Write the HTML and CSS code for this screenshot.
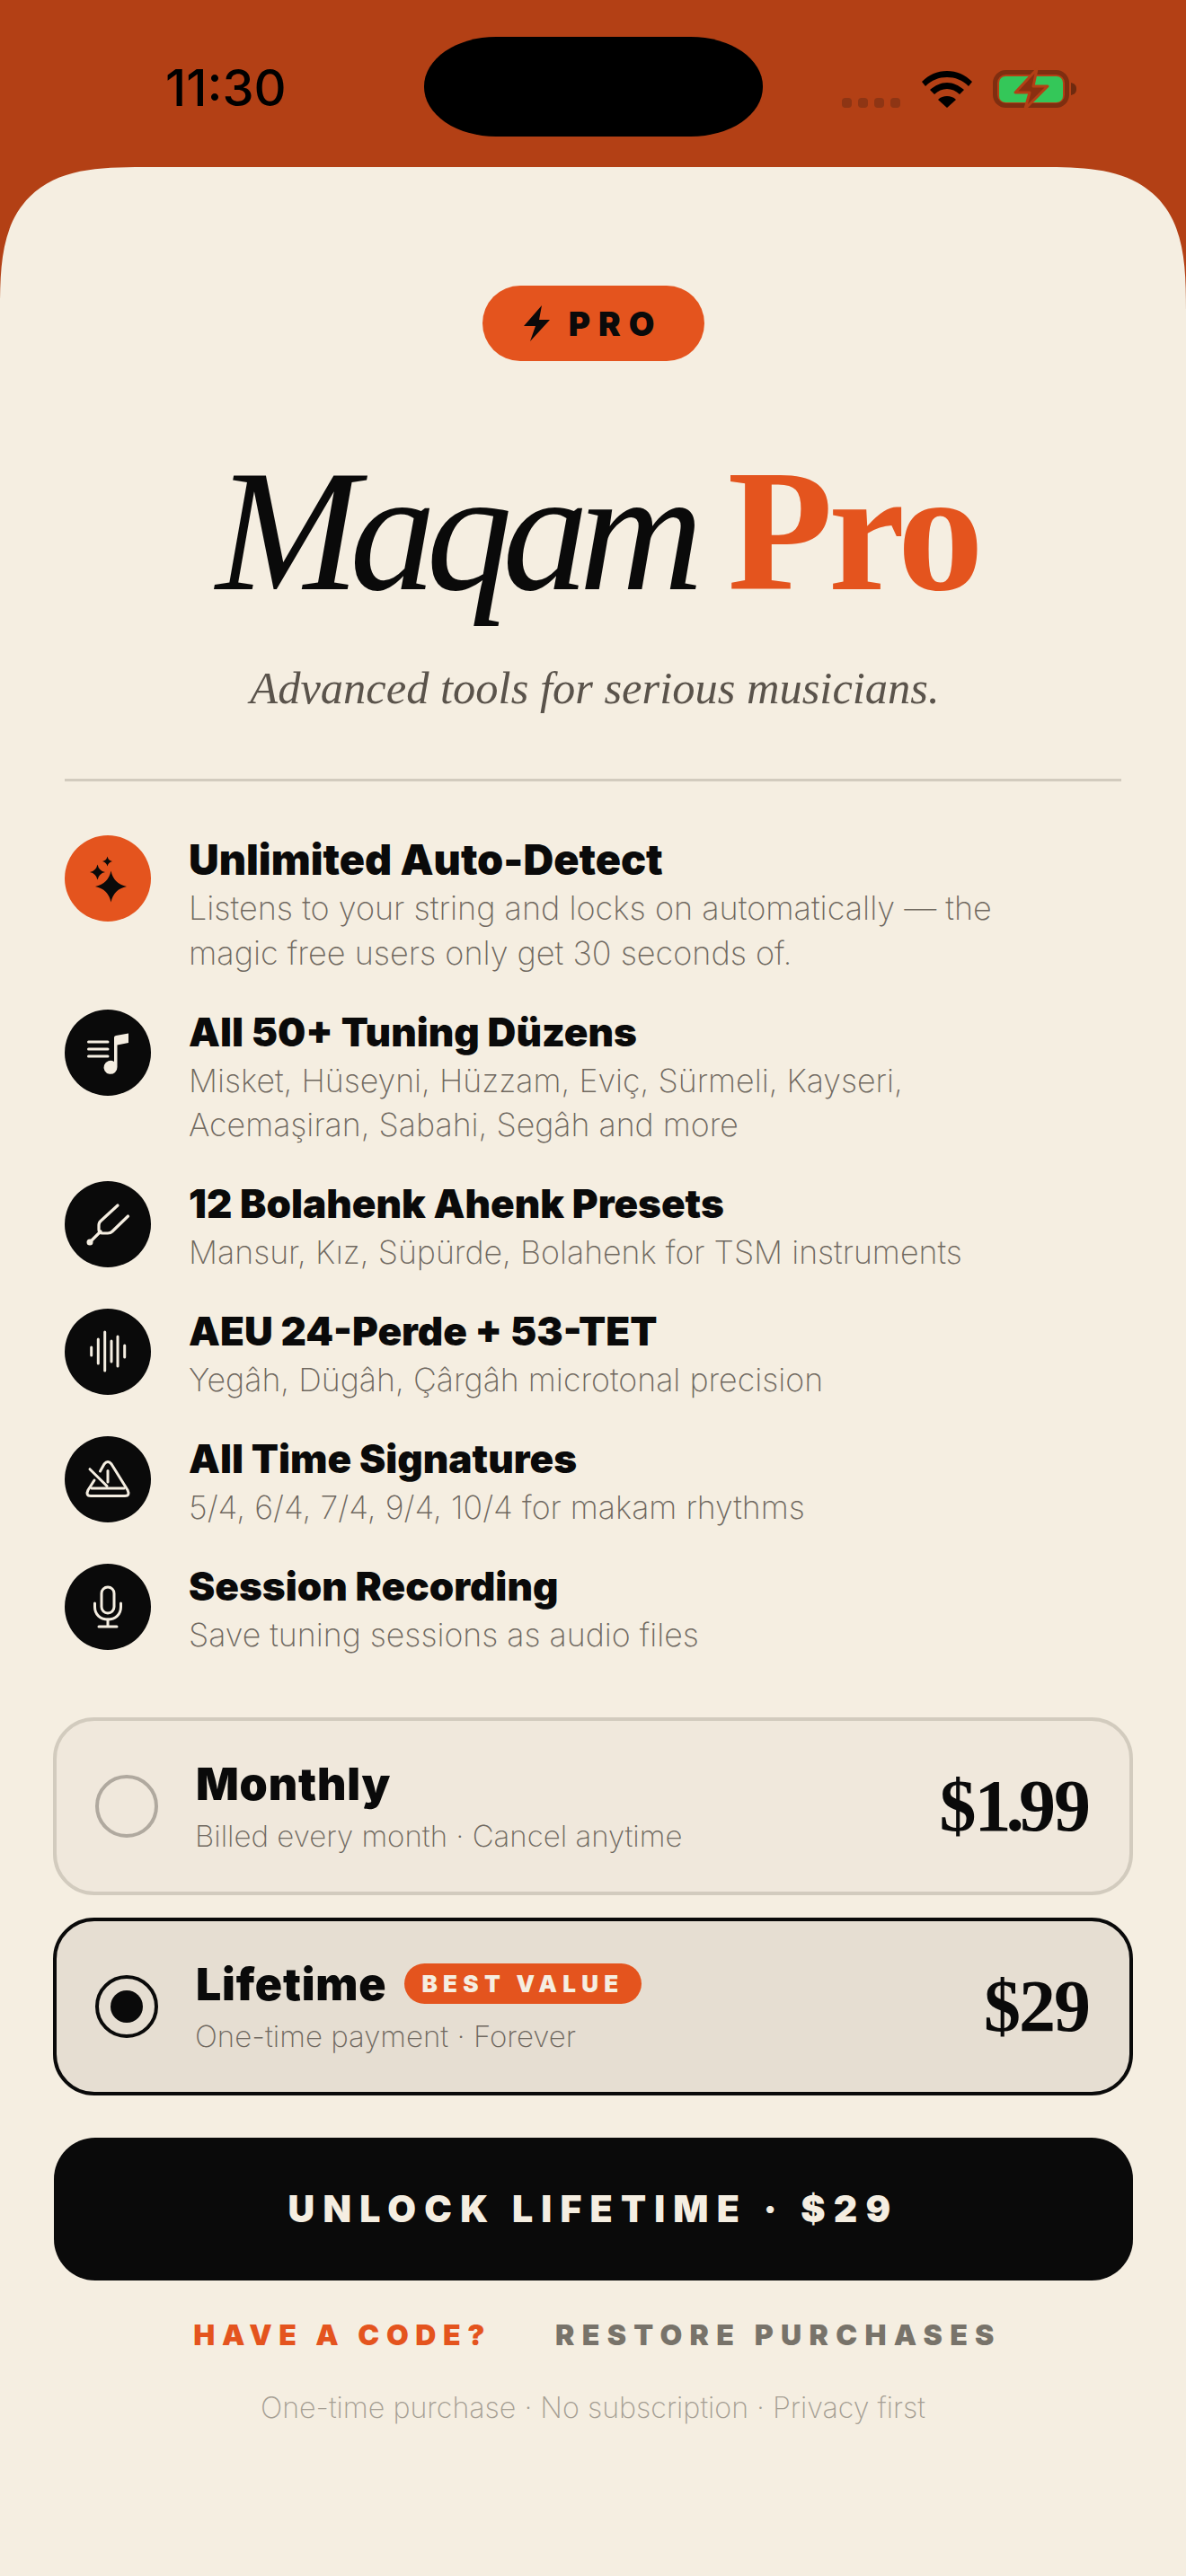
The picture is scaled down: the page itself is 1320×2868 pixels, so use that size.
FILE: index.html
```html
<!DOCTYPE html>
<html lang="en">
<head>
<meta charset="utf-8">
<title>Maqam Pro</title>
<link rel="stylesheet" href="styles.css">
</head>
<body>
<div class="screen">
  <header class="status">
    <span class="time">11:30</span>
    <span class="island"></span>
    <span class="status-icons">
      <span class="dots"><i></i><i></i><i></i><i></i></span>
      <svg class="wifi" width="58" height="42" viewBox="0 0 58 42"><path d="M29 1C18 1 9 5 1 13l4 5C12 11 20 8 29 8s17 3 24 10l4-5C49 5 40 1 29 1z" fill="#000"/><path d="M29 14c-7 0-13 3-19 8l5 5c4-4 9-6 14-6s10 2 14 6l5-5c-6-5-12-8-19-8z" fill="#000"/><path d="M29 29c-4 0-7 1-10 4l10 9 10-9c-3-3-6-4-10-4z" fill="#000"/></svg>
      <svg class="battery" width="97" height="48" viewBox="0 0 97 48"><rect x="4.500" y="5.500" width="80" height="37" rx="12" fill="none" stroke="#7f2e10" stroke-width="5"/><rect x="9" y="10" width="71" height="29" rx="7" fill="#34c759"/><path d="M89 17c4 1 6 3 6 7s-2 6-6 7z" fill="#6e2a0f"/><path d="M51 2L27 28h16l-5 18 25-25H47z" fill="#8a2f10" stroke="#b34015" stroke-width="3" stroke-linejoin="round"/></svg>
    </span>
  </header>
  <main class="sheet">
    <div class="badge-row">
      <span class="pro-badge">
        <svg width="30" height="41" viewBox="0 0 30 41"><path d="M20 0L0 23h13L7 40l22-24H17z" fill="#0a0a0a"/></svg>
        <span>PRO</span>
      </span>
    </div>
    <h1 class="title"><em>Maqam</em> <strong>Pro</strong></h1>
    <p class="subtitle">Advanced tools for serious musicians.</p>
    <hr class="rule">
    <ul class="features">
      <li class="feature">
        <span class="ficon accent">
          <svg width="96" height="96" viewBox="0 0 96 96" fill="#0a0a0a"><path d="M51.500 39.500Q54.500 54 69 57Q54.500 60 51.500 74.500Q48.500 60 34 57Q48.500 54 51.500 39.500z"/><path d="M36.500 32.500Q38 39.500 45 41Q38 42.500 36.500 49.500Q35 42.500 28 41Q35 39.500 36.500 32.500z"/><path d="M47.500 23.500Q48.500 28 53 29Q48.500 30 47.500 34.500Q46.500 30 42 29Q46.500 28 47.500 23.500z"/></svg>
        </span>
        <div class="ftext lead">
          <h3>Unlimited Auto-Detect</h3>
          <p>Listens to your string and locks on automatically — the magic free users only get 30 seconds of.</p>
        </div>
      </li>
      <li class="feature">
        <span class="ficon">
          <svg width="96" height="96" viewBox="0 0 96 96"><path d="M26.500 36H48M26.500 44H48M26.500 52H48" stroke="#f5eee1" stroke-width="3" stroke-linecap="round" fill="none"/><path d="M55 31Q55 29.500 57 29L71 26.500V37L58.500 39.500V64A7.500 7.500 0 1 1 55 58z" fill="#f5eee1"/></svg>
        </span>
        <div class="ftext">
          <h3>All 50+ Tuning Düzens</h3>
          <p>Misket, Hüseyni, Hüzzam, Eviç, Sürmeli, Kayseri, Acemaşiran, Sabahi, Segâh and more</p>
        </div>
      </li>
      <li class="feature">
        <span class="ficon">
          <svg width="96" height="96" viewBox="0 0 96 96" fill="none" stroke="#f5eee1" stroke-width="3.200" stroke-linecap="round" stroke-linejoin="round"><path d="M59 27L40.500 44Q38 46 38 49V54Q38 58 42 58H48Q51 58 53 56L70.500 39"/><path d="M40 56L28 68"/><circle cx="28" cy="68" r="3.500" fill="#f5eee1" stroke="none"/></svg>
        </span>
        <div class="ftext">
          <h3>12 Bolahenk Ahenk Presets</h3>
          <p>Mansur, Kız, Süpürde, Bolahenk for TSM instruments</p>
        </div>
      </li>
      <li class="feature">
        <span class="ficon">
          <svg width="96" height="96" viewBox="0 0 96 96" stroke="#f5eee1" stroke-width="3" stroke-linecap="round" fill="none"><path d="M29.700 43V52M37.300 34V61M44.700 26V69M52 36V59M59 31V64M66.700 41V54"/></svg>
        </span>
        <div class="ftext">
          <h3>AEU 24-Perde + 53-TET</h3>
          <p>Yegâh, Dügâh, Çârgâh microtonal precision</p>
        </div>
      </li>
      <li class="feature">
        <span class="ficon">
          <svg width="96" height="96" viewBox="0 0 96 96" fill="none" stroke="#f5eee1" stroke-width="3" stroke-linecap="round" stroke-linejoin="round"><path d="M39.500 39L44 31Q48 26 52 31L70 60Q73 66.500 67 66.500H29Q23 66.500 26 60L33 49"/><path d="M30 58H66"/><path d="M28 36.700L47 55.500"/><path d="M48 38.500V51"/></svg>
        </span>
        <div class="ftext">
          <h3>All Time Signatures</h3>
          <p>5/4, 6/4, 7/4, 9/4, 10/4 for makam rhythms</p>
        </div>
      </li>
      <li class="feature">
        <span class="ficon">
          <svg width="96" height="96" viewBox="0 0 96 96" fill="none" stroke="#f5eee1" stroke-width="3" stroke-linecap="round" stroke-linejoin="round"><rect x="41" y="26" width="14" height="29" rx="7"/><path d="M33.500 44V48C33.500 57 40 62 48 62S62.500 57 62.500 48V44"/><path d="M48 62V70M38 70H58"/></svg>
        </span>
        <div class="ftext">
          <h3>Session Recording</h3>
          <p>Save tuning sessions as audio files</p>
        </div>
      </li>
    </ul>
    <section class="plans">
      <div class="plan">
        <span class="radio"></span>
        <div class="plan-text">
          <div class="plan-name">Monthly</div>
          <div class="plan-note">Billed every month · Cancel anytime</div>
        </div>
        <div class="price">$<span class="tight">1.</span>99</div>
      </div>
      <div class="plan selected">
        <span class="radio on"><i></i></span>
        <div class="plan-text">
          <div class="plan-name">Lifetime <span class="best">BEST VALUE</span></div>
          <div class="plan-note">One-time payment · Forever</div>
        </div>
        <div class="price">$29</div>
      </div>
    </section>
    <button class="cta">UNLOCK LIFETIME · $29</button>
    <div class="links"><span class="code">HAVE A CODE?</span><span class="restore">RESTORE PURCHASES</span></div>
    <p class="foot">One-time purchase · No subscription · Privacy first</p>
  </main>
</div>
</body>
</html>
```
FILE: styles.css
```css
* { box-sizing: border-box; }
html, body { margin: 0; padding: 0; }
body { width: 1320px; height: 2868px; overflow: hidden; background: #b34015; font-family: Inter, "Liberation Sans", sans-serif; color: #0a0a0a; }
.screen { display: flex; flex-direction: column; height: 2868px; }
.status { height: 186px; flex: none; display: flex; align-items: flex-start; position: relative; }
.time { margin: 64px 0 0 184px; font-size: 56px; line-height: 68px; font-weight: 500; letter-spacing: 0; color: #000; }
.island { position: absolute; left: 472px; top: 41px; width: 377px; height: 111px; border-radius: 80px / 55px; background: #000; }
.status-icons { position: absolute; left: 937px; top: 75px; display: flex; align-items: flex-end; }
.dots { display: flex; gap: 7px; margin-right: 23px; }
.dots i { width: 11px; height: 11px; border-radius: 4px; background: #8e3514; display: block; }
.wifi { margin-right: 20px; display: block; }
.battery { display: block; margin-bottom: -3px; }
.sheet { flex: 1; background: #f5eee1; border-radius: 160px 160px 0 0; corner-shape: superellipse(1.58); padding-top: 132px; display: flex; flex-direction: column; }
.badge-row { display: flex; justify-content: center; }
.pro-badge { width: 247px; height: 84px; border-radius: 42px; background: #e4541e; display: flex; align-items: center; justify-content: center; gap: 20px; font-weight: 900; font-size: 37px; letter-spacing: 9px; }
.title { margin: 94px 0 0; padding-left: 10px; text-align: center; font-family: "Liberation Serif", serif; font-size: 192px; line-height: 192px; font-weight: 400; word-spacing: -10px; }
.title em { font-style: italic; letter-spacing: -11px; }
.title strong { color: #e4541e; font-weight: 700; letter-spacing: -5px; }
.subtitle { margin: 48px 0 0; padding-left: 4px; text-align: center; font-family: "Liberation Serif", serif; font-style: italic; font-size: 50.500px; line-height: 60px; color: #5a534b; }
.rule { margin: 71px 72px 0; height: 3px; border: 0; background: #d2cbbe; }
.features { list-style: none; margin: 60px 0 0; padding: 0 72px; display: flex; flex-direction: column; gap: 35.500px; }
.feature { display: flex; gap: 42px; align-items: flex-start; }
.ficon { width: 96px; height: 96px; flex: none; border-radius: 50%; background: #0a0a0a; display: block; }
.ficon svg { display: block; }
.ficon.accent { background: #e4541e; }
.ftext { flex: 1; padding-bottom: 2px; }
.ftext h3 { margin: 0; font-size: 44px; line-height: 50px; font-weight: 900; }
.ftext p { margin: 5px 0 0; width: 960px; font-size: 35.700px; line-height: 49.500px; font-weight: 200; color: #6f685f; }
.ftext.lead { padding-top: 2px; }
.ftext.lead h3 { font-size: 46.700px; }
.ftext.lead p { font-size: 36px; }
.plans { margin: 64px 59px 0; display: flex; flex-direction: column; gap: 25px; }
.plan { height: 198px; border: 4px solid #d2cbbe; border-radius: 46px; background: #f0e8dc; display: flex; align-items: center; padding: 0 45px 0 43px; }
.plan.selected { border-color: #0a0a0a; background: #e6ded2; }
.radio { width: 70px; height: 70px; border-radius: 50%; border: 4px solid #b0a99f; flex: none; display: flex; align-items: center; justify-content: center; }
.radio.on { border-color: #0a0a0a; }
.radio i { width: 36px; height: 36px; border-radius: 50%; background: #0a0a0a; display: block; }
.plan-text { flex: 1; margin-left: 41px; }
.plan-name { padding-left: 1px; font-size: 50px; line-height: 60px; font-weight: 900; letter-spacing: 0.800px; display: flex; align-items: center; gap: 20px; }
.plan-note { margin-top: 6px; font-size: 33px; line-height: 44px; font-weight: 200; color: #6f685f; }
.best { background: #e4541e; color: #f5eee1; height: 45px; line-height: 45px; border-radius: 23px; padding: 0 19px; font-size: 26px; font-weight: 900; letter-spacing: 6.300px; }
.price { font-family: "Liberation Serif", serif; font-size: 82px; line-height: 90px; font-weight: 700; letter-spacing: -2px; }
.tight { letter-spacing: -6px; }
.cta { margin: 47px 59px 0 60px; height: 159px; border: 0; border-radius: 46px; background: #0a0a0a; color: #f5eee1; font-family: Inter, sans-serif; font-size: 41px; font-weight: 900; letter-spacing: 9.200px; }
.links { margin-top: 41px; padding-left: 10px; display: flex; justify-content: center; gap: 71px; font-size: 32px; line-height: 40px; font-weight: 900; }
.code { color: #e4541e; letter-spacing: 7.600px; }
.restore { color: #78736a; letter-spacing: 8.300px; }
.foot { margin: 40px 0 0; text-align: center; font-size: 32.200px; line-height: 42px; font-weight: 200; color: #a59e93; }
```
